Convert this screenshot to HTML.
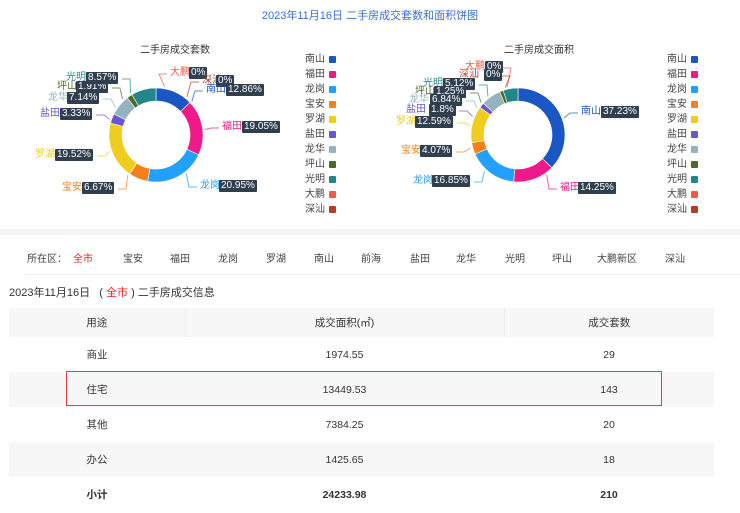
<!DOCTYPE html>
<html><head><meta charset="utf-8"><style>
body{margin:0;width:740px;height:513px;background:#fff;font-family:"Liberation Sans","Noto Sans CJK SC",sans-serif;position:relative;overflow:hidden;color:#333}
.a{position:absolute;white-space:nowrap}
.t{font-size:10px;line-height:12px}
.bx{position:absolute;background:#2f3f50;color:#fff;font-size:10px;line-height:12px;padding:0 2px;border-radius:1px;white-space:nowrap}
.lg{position:absolute;font-size:10px;color:#444;line-height:12px}
.lg i{position:absolute;left:24px;top:2px;width:7px;height:7px;border-radius:1px}
table{position:absolute;left:9px;top:308px;width:705px;border-collapse:collapse;font-size:10.5px;color:#333}
td{height:35px;text-align:center;padding:0;box-sizing:border-box}
tr.h td{height:29px}
tr.g td{background:#f7f7f7}
</style></head><body>
<div class="a" style="left:0;width:740px;top:7px;text-align:center;font-size:11px;color:#3a6fd0">2023年11月16日 二手房成交套数和面积饼图</div>
<div class="a" style="left:140px;top:41px;font-size:10px;color:#333">二手房成交套数</div>
<div class="a" style="left:504px;top:41px;font-size:10px;color:#333">二手房成交面积</div>
<svg class="a" style="left:0;top:0" width="740" height="230" id="sv"></svg>
<div id="lab"></div>
<div style="position:absolute;left:0;top:229px;width:740px;height:6px;background:#f5f5f5"></div>
<div class="a" style="top:250px;left:27px;font-size:10px;color:#444">所在区：<span style="color:#f02020;margin-left:6px">全市</span></div>
<div class="a" style="top:250px;font-size:10px;color:#444;left:0" id="dist"></div>
<div style="position:absolute;left:25px;top:274px;width:715px;height:1px;background:#eee"></div>
<div class="a" style="left:9px;top:284px;font-size:11px;color:#333">2023年11月16日 &nbsp;&nbsp;( <span style="color:#f02020">全市</span> ) 二手房成交信息</div>
<table>
<tr class="g h"><td style="width:176px">用途</td><td style="width:319px;border-left:1px solid #eee;border-right:1px solid #eee">成交面积(㎡)</td><td>成交套数</td></tr>
<tr><td>商业</td><td>1974.55</td><td>29</td></tr>
<tr class="g"><td>住宅</td><td>13449.53</td><td>143</td></tr>
<tr><td>其他</td><td>7384.25</td><td>20</td></tr>
<tr class="g"><td>办公</td><td>1425.65</td><td>18</td></tr>
<tr><td style="font-weight:bold">小计</td><td style="font-weight:bold">24233.98</td><td style="font-weight:bold">210</td></tr>
</table>
<div style="position:absolute;left:66px;top:371px;width:594px;height:33px;border:1.5px solid #f03a3a"></div>
<script>
var C={南山:'#1a56c4',福田:'#f0198a',龙岗:'#22a0ff',宝安:'#f5801e',罗湖:'#eecd1e',盐田:'#6b55cf',龙华:'#93b3be',坪山:'#4e6a2b',光明:'#23878a',大鹏:'#ee5a4b',深汕:'#b23e28'};
var names=['南山','福田','龙岗','宝安','罗湖','盐田','龙华','坪山','光明'];
var d1=[12.86,19.05,20.95,6.67,19.52,3.33,7.14,1.91,8.57];
var d2=[37.23,14.25,16.85,4.07,12.59,1.8,6.84,1.25,5.12];
var s='';
function donut(cx,cy,d){var a=-Math.PI/2,R=47,r=34;
for(var i=0;i<d.length;i++){var b=a+d[i]/100*2*Math.PI;var l=(b-a)>Math.PI?1:0;
function p(rr,t){return (cx+rr*Math.cos(t)).toFixed(2)+' '+(cy+rr*Math.sin(t)).toFixed(2)}
s+='<path d="M'+p(R,a)+' A'+R+' '+R+' 0 '+l+' 1 '+p(R,b)+' L'+p(r,b)+' A'+r+' '+r+' 0 '+l+' 0 '+p(r,a)+'Z" fill="'+C[names[i]]+'" stroke="#fff" stroke-width="0.6"/>';a=b;}}
donut(156,135,d1);donut(518,135,d2);
var L1=[['大鹏',170,67,189,'0%'],['深汕',202,75,216,'0%'],['南山',206,84,226,'12.86%'],['福田',222,121,242,'19.05%'],['龙岗',200,180,219,'20.95%'],['宝安',62,182,82,'6.67%'],['罗湖',35,149,55,'19.52%'],['盐田',40,108,60,'3.33%'],['龙华',48,92,67,'7.14%'],['坪山',57,81,76,'1.91%'],['光明',66,72,86,'8.57%']];
var L2=[['大鹏',465,61,485,'0%'],['深汕',459,69,484,'0%'],['光明',423,78,443,'5.12%'],['坪山',415,86,434,'1.25%'],['龙华',409,94,430,'6.84%'],['盐田',406,104,429,'1.8%'],['罗湖',396,116,415,'12.59%'],['宝安',401,145,420,'4.07%'],['龙岗',413,175,432,'16.85%'],['南山',581,106,601,'37.23%'],['福田',560,182,578,'14.25%']];
var h='';
function lab(L,cx,cy){L.forEach(function(q){h+='<div class="a t" style="left:'+q[1]+'px;top:'+q[2]+'px;color:'+C[q[0]]+'">'+q[0]+'</div><div class="bx" style="left:'+q[3]+'px;top:'+q[2]+'px">'+q[4]+'</div>';
var right=q[1]>cx;var lx=right?q[1]-3:q[3]+(q[4].length*6+6);var ly=q[2]+7;
var ang=Math.atan2(ly-cy,lx-cx);var ex=cx+49*Math.cos(ang),ey=cy+49*Math.sin(ang);
s+='<polyline points="'+lx+','+ly+' '+(lx+(right?-8:8))+','+ly+' '+ex.toFixed(1)+','+ey.toFixed(1)+'" fill="none" stroke="'+C[q[0]]+'" stroke-width="1" opacity="0.7"/>';});}
lab(L1,156,135);lab(L2,518,135);
var all=['南山','福田','龙岗','宝安','罗湖','盐田','龙华','坪山','光明','大鹏','深汕'];
all.forEach(function(n,i){h+='<div class="lg" style="left:305px;top:'+(54+i*15)+'px">'+n+'<i style="background:'+C[n]+'"></i></div>';
h+='<div class="lg" style="left:667px;top:'+(54+i*15)+'px">'+n+'<i style="background:'+C[n]+'"></i></div>';});
document.getElementById('sv').innerHTML=s;document.getElementById('lab').innerHTML=h;
var ds=[['宝安',123],['福田',170],['龙岗',218],['罗湖',266],['南山',314],['前海',361],['盐田',410],['龙华',456],['光明',505],['坪山',552],['大鹏新区',597],['深汕',665]];
document.getElementById('dist').innerHTML=ds.map(function(x){return '<span style="position:absolute;left:'+x[1]+'px">'+x[0]+'</span>'}).join('');
</script>
</body></html>
